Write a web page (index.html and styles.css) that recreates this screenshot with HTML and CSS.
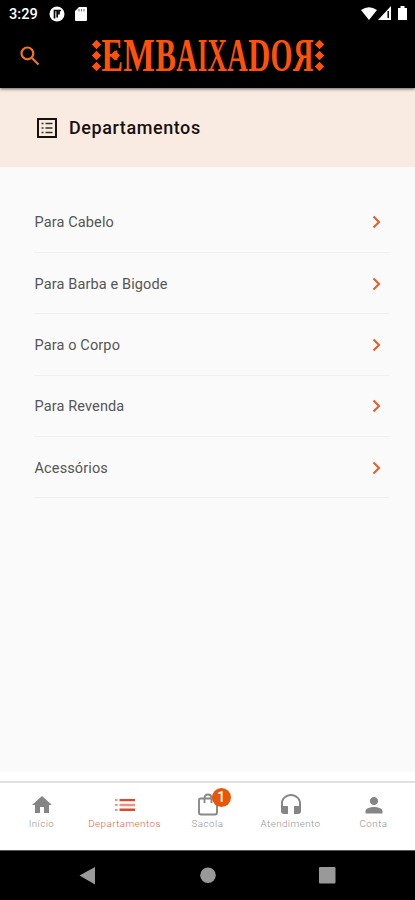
FILE: index.html
```html
<!DOCTYPE html>
<html lang="pt-BR">
<head>
<meta charset="utf-8">
<title>Embaixador</title>
<link rel="stylesheet" href="styles.css">
</head>
<body>
<header class="top">
  <div class="status">
    <span class="time">3:29</span>
    <svg class="s-app" width="16" height="16" viewBox="0 0 16 16"><circle cx="8" cy="8" r="7.5" fill="#fff"/><path d="M5.500 12.500V4.500h2.700v7M10 8.500V4.500h2" fill="none" stroke="#000" stroke-width="1.700"/></svg>
    <svg class="s-sd" width="12" height="14" viewBox="0 0 12 14"><path d="M4 0h7q1 0 1 1v12q0 1-1 1H1q-1 0-1-1V4z" fill="#fff"/><path d="M4 2v2.500M6.500 2v2.500M9 2v2.500" stroke="#777" stroke-width="1.100"/></svg>
    <svg class="s-sys" width="48" height="16" viewBox="0 0 48 16"><path d="M0 4Q8-1.500 16 4L8 14z" fill="#fff"/><path d="M17 14L30 0v14z" fill="#fff"/><path d="M27.200 5v7" stroke="#000" stroke-width="1.500"/><path d="M37 2h2.500V0h4v2H46v12h-9z" fill="#fff"/></svg>
  </div>
  <div class="brand">
    <svg class="search" width="20" height="20" viewBox="0 0 20 20"><circle cx="7.400" cy="7.400" r="5.900"/><path d="M12 12l6.500 6.500"/></svg>
    <svg class="logo" width="234" height="36" viewBox="91 37 234 36">
      <g class="gems">
        <path d="M96.500 39.800l4.700 4.700-4.700 4.700-4.700-4.700zM96.500 50.800l4.700 4.700-4.700 4.700-4.700-4.700zM96.500 61.800l4.700 4.700-4.700 4.700-4.700-4.700z"/>
        <path d="M319.500 39.800l4.700 4.700-4.700 4.700-4.700-4.700zM319.500 50.800l4.700 4.700-4.700 4.700-4.700-4.700zM319.500 61.800l4.700 4.700-4.700 4.700-4.700-4.700z"/>
        <path d="M115 50.500l5 5-5 5-5-5z"/>
      </g>
      <g class="word">
        <text x="101.500" y="71" textLength="21.500" lengthAdjust="spacingAndGlyphs">E</text>
        <text x="123.300" y="71" textLength="31.500" lengthAdjust="spacingAndGlyphs">M</text>
        <text x="155.500" y="71" textLength="20.500" lengthAdjust="spacingAndGlyphs">B</text>
        <text x="176.300" y="71" textLength="21" lengthAdjust="spacingAndGlyphs">A</text>
        <text x="197.700" y="71" textLength="9.500" lengthAdjust="spacingAndGlyphs">I</text>
        <text x="207.500" y="71" textLength="19.500" lengthAdjust="spacingAndGlyphs">X</text>
        <text x="227.300" y="71" textLength="20.500" lengthAdjust="spacingAndGlyphs">A</text>
        <text x="248.200" y="71" textLength="22" lengthAdjust="spacingAndGlyphs">D</text>
        <text x="270.500" y="71" textLength="22" lengthAdjust="spacingAndGlyphs">O</text>
        <text transform="translate(313.500 71) scale(-1 1)" textLength="20.500" lengthAdjust="spacingAndGlyphs">R</text>
      </g>
    </svg>
  </div>
</header>
<section class="title">
  <svg width="20" height="20" viewBox="0 0 20 20"><path d="M1 1h18v18H1z" fill="none" stroke="#16110f" stroke-width="2"/><path d="M4.500 5.500h2M4.500 10h2M4.500 14.500h2M8.500 5.500h7M8.500 10h7M8.500 14.500h7" stroke="#37302d" stroke-width="1.600"/></svg>
  <h1>Departamentos</h1>
</section>
<main>
  <ul class="list">
    <li><span>Para Cabelo</span><svg class="chev" viewBox="0 0 9 14"><path d="M1.500 1.500L7 7l-5.500 5.500"/></svg></li>
    <li><span>Para Barba e Bigode</span><svg class="chev" viewBox="0 0 9 14"><path d="M1.500 1.500L7 7l-5.500 5.500"/></svg></li>
    <li><span>Para o Corpo</span><svg class="chev" viewBox="0 0 9 14"><path d="M1.500 1.500L7 7l-5.500 5.500"/></svg></li>
    <li><span>Para Revenda</span><svg class="chev" viewBox="0 0 9 14"><path d="M1.500 1.500L7 7l-5.500 5.500"/></svg></li>
    <li><span>Acessórios</span><svg class="chev" viewBox="0 0 9 14"><path d="M1.500 1.500L7 7l-5.500 5.500"/></svg></li>
  </ul>
</main>
<nav class="tabs">
  <a><svg viewBox="0 0 24 24"><path d="M10 20v-6h4v6h5v-8h3L12 3 2 12h3v8z"/></svg><span>Início</span></a>
  <a class="active"><svg viewBox="0 0 24 24"><path d="M6.500 6H22v2.300H6.500zM6.500 15.500H22v2.500H6.500z"/><path d="M2 6h2.500v2H2zM2 11h2.500v2H2zM2 16h2.500v2H2zM6.500 10.700H22v2.500H6.500z" opacity=".6"/></svg><span>Departamentos</span></a>
  <a><svg viewBox="0 0 24 24"><path d="M4.500 5.500h15q1.500 0 1.500 1.500v12.500q0 2-2 2H5q-2 0-2-2V7q0-1.500 1.500-1.500zM8.500 10V5q0-3.500 3.500-3.500T15.500 5v5" fill="none" stroke="#888" stroke-width="1.900"/></svg><span>Sacola</span><b class="badge">1</b></a>
  <a><svg viewBox="0 0 24 24"><path d="M12 1C7 1 2 5 2 10v8c0 2 1 3 3 3h4v-8H4v-3c0-4 4-7 8-7s8 3 8 7v3h-5v8h4c2 0 3-1 3-3v-8c0-5-5-9-10-9z"/></svg><span>Atendimento</span></a>
  <a><svg viewBox="0 0 24 24"><path d="M12 12c2.200 0 4.200-1.800 4.200-4S14.200 4 12 4 7.800 5.800 7.800 8s2 4 4.200 4zm0 2c-3 0-8.500 1.300-8.500 4v2.500h17V18c0-2.700-5.500-4-8.500-4z"/></svg><span>Conta</span></a>
</nav>
<footer class="system">
  <svg width="415" height="49" viewBox="0 851 415 49"><path d="M95 867v17.500L79.500 875.500z"/><circle cx="208" cy="875.300" r="7.800"/><rect x="319" y="867" width="16.500" height="16.500" rx="1"/></svg>
</footer>
</body>
</html>
```
FILE: styles.css
```css
* { box-sizing: border-box; }
body {
  margin: 0;
  width: 415px;
  height: 900px;
  overflow: hidden;
  display: flex;
  flex-direction: column;
  background: #fafafa;
  font-family: Roboto, "Liberation Sans", sans-serif;
}
svg { display: block; flex: none; }
.top {
  height: 88px;
  background: #000;
  box-shadow: 0 1px 3px rgba(0, 0, 0, .6);
  z-index: 1;
}
.status {
  height: 28px;
  display: flex;
  align-items: center;
  padding: 0 7px 0 9px;
}
.time { width: 40px; color: #fff; font-size: 14.5px; font-weight: 500; letter-spacing: .1px; white-space: nowrap; }
.s-sd { margin-left: 10px; }
.s-sys { margin-left: auto; margin-right: -1px; }
.brand { display: flex; padding-left: 20px; }
.search { margin-top: 18px; fill: none; stroke: #f27519; stroke-width: 2.2; }
.logo { margin: 9px 0 0 51px; overflow: visible; }
.gems { fill: #ff5208; }
.word {
  fill: #ff5208;
  font: bold 47px "Liberation Serif", serif;
}
.title {
  height: 79px;
  display: flex;
  align-items: center;
  gap: 12px;
  padding-left: 37px;
  background: #faebe2;
}
h1 { margin: 0; font-size: 18px; line-height: 24px; font-weight: 500; letter-spacing: .57px; color: #16110f; }
main { flex: 1; padding: 24.5px 26px 0 34px; }
.list { margin: 0; padding: 0; list-style: none; }
.list li {
  height: 61.4px;
  display: flex;
  align-items: center;
  justify-content: space-between;
  padding: 1px 8px 0 .5px;
  border-bottom: 1px solid #f0f0f0;
  font-size: 14.5px;
  letter-spacing: .13px;
  color: #555;
}
.list span { padding-top: 1px; }
.chev { width: 9px; height: 14px; fill: none; stroke: #e85a28; stroke-width: 2; }
.tabs {
  height: 78px;
  margin-top: auto;
  padding-top: 9px;
  display: grid;
  grid-template-columns: repeat(5, 83px);
  background: linear-gradient(#fff 9px, #e0e0e0 9px, #e0e0e0 11px, #fff 11px);
}
.tabs a {
  position: relative;
  display: flex;
  flex-direction: column;
  align-items: center;
  padding-top: 12px;
  color: #929292;
  font-size: 9.8px;
  line-height: 12px;
  font-weight: 300;
  letter-spacing: .45px;
}
.tabs span { padding-top: 1px; }
.tabs svg { width: 24px; height: 24px; fill: #858585; }
.tabs .active { color: #ef5a3c; }
.tabs .active svg { fill: #dc4930; }
.badge {
  position: absolute;
  left: 46px;
  top: 7px;
  width: 19px;
  height: 19px;
  border-radius: 50%;
  background: #e95706;
  color: #fff;
  font-size: 14px;
  line-height: 19px;
  font-weight: 500;
  text-align: center;
}
.system { height: 50px; border-top: 1px solid #555; background: #000; }
.system svg { fill: #999; }
```
